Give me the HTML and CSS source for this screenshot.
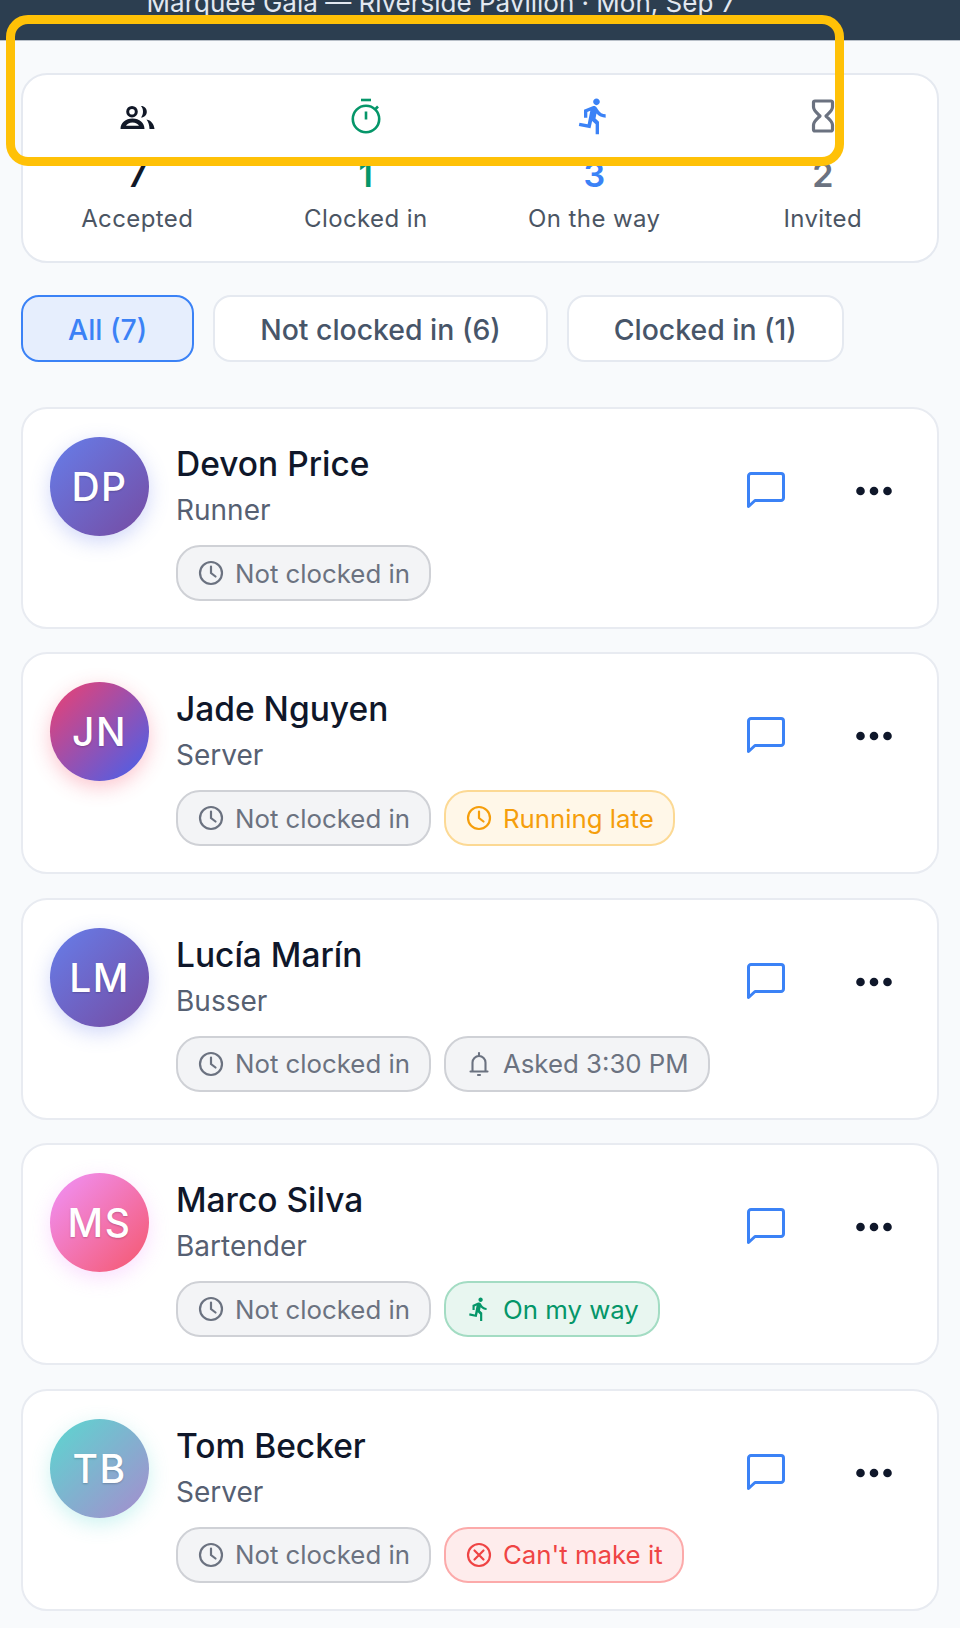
FILE: index.html
```html
<!DOCTYPE html>
<html>
<head>
<meta charset="UTF-8">
<meta name="viewport" content="width=device-width, initial-scale=1.0">
<title>Marquee Gala Staff</title>
<link rel="stylesheet" href="styles.css">
</head>
<body>
<svg class="defs" width="0" height="0">
    <symbol id="i-run" viewBox="0 0 24 24"><path fill="currentColor" d="M13.49 5.48c1.1 0 2-.9 2-2s-.9-2-2-2-2 .9-2 2 .9 2 2 2zm-3.6 13.9l1-4.4 2.1 2v6h2v-7.5l-2.1-2 .6-3c1.3 1.5 3.3 2.5 5.5 2.5v-2c-1.9 0-3.5-1-4.3-2.4l-1-1.6c-.4-.6-1-1-1.7-1-.3 0-.5.1-.8.1l-5.2 2.2v4.7h2v-3.4l1.8-.7-1.6 8.1-4.9-1-.4 2 7 1.4z"/></symbol>
    <symbol id="i-clock" viewBox="0 0 26 26"><g fill="none" stroke="currentColor" stroke-width="2.2" stroke-linecap="round"><circle cx="13" cy="13" r="11"/><path d="M13 6.500V13l4.500 3.500"/></g></symbol>
    <symbol id="i-bell" viewBox="0 0 26 26"><g fill="none" stroke="currentColor" stroke-width="2.1" stroke-linecap="round" stroke-linejoin="round"><path d="M6.500 20v-8.500a6.500 6.500 0 0 1 13 0V20"/><path d="M4.500 20.500h17"/><path d="M13 2v2.500"/><path d="M12 24h2"/></g></symbol>
    <symbol id="i-cross" viewBox="0 0 26 26"><g fill="none" stroke="currentColor" stroke-width="2.2" stroke-linecap="round"><circle cx="13" cy="13" r="11"/><path d="M8.500 8.500l9 9M17.500 8.500l-9 9"/></g></symbol>
    <symbol id="i-chat" viewBox="0 0 38 38"><path fill="none" stroke="currentColor" stroke-width="3" stroke-linejoin="round" d="M1.500 4a2.500 2.500 0 0 1 2.500-2.500h30a2.500 2.500 0 0 1 2.500 2.500v22a2.500 2.500 0 0 1-2.500 2.500H8l-6.500 6z"/></symbol>
    <symbol id="i-dots" viewBox="0 0 36 10"><g fill="currentColor"><circle cx="4.500" cy="5" r="4.300"/><circle cx="18" cy="5" r="4.300"/><circle cx="31.500" cy="5" r="4.300"/></g></symbol>
</svg>

<div class="topbar"><span class="title">Marquee Gala — Riverside Pavilion · Mon, Sep 7</span></div>
<div class="highlight"></div>

<div class="content">
    <div class="stats">
        <div class="stat">
            <svg class="stat-icon c-dark" viewBox="0 0 40 40"><g fill="currentColor"><circle cx="15" cy="15.700" r="4.300" fill="none" stroke="currentColor" stroke-width="3"/><path d="M24 10c3.500 0 5.800 2.500 5.800 5.700S27.500 21.500 24 21.500c1.300-1.600 2-3.600 2-5.800s-.7-4.100-2-5.700z"/><path fill-rule="evenodd" d="M3.500 33c0-6 5-10.500 12-10.500s12 4.500 12 10.500zM9 29.800h13c-1-2-3.500-3.300-6.500-3.300s-5.500 1.300-6.500 3.300z"/><path d="M29.500 23.500c4.500.8 7.500 4.500 8 9.500h-5c-.1-3.800-1.100-6.800-3-9.500z"/></g></svg>
            <div class="num c-dark">7</div>
            <div class="stat-label">Accepted</div>
        </div>
        <div class="stat">
            <svg class="stat-icon c-green" viewBox="0 0 40 40"><g fill="none" stroke="currentColor" stroke-width="2.600"><circle cx="20" cy="23" r="13.200"/><path d="M15 4h10"/><path d="M29.500 13l2.500-2.500"/><path d="M20 15.500v8"/></g></svg>
            <div class="num c-green">1</div>
            <div class="stat-label">Clocked in</div>
        </div>
        <div class="stat">
            <svg class="stat-icon c-blue"><use href="#i-run"/></svg>
            <div class="num c-blue">3</div>
            <div class="stat-label">On the way</div>
        </div>
        <div class="stat">
            <svg class="stat-icon c-grey" viewBox="0 0 40 40"><path fill="none" stroke="currentColor" stroke-width="3.200" stroke-linejoin="round" d="M12 5h16a1.500 1.500 0 0 1 1.500 1.500v4.500c0 3.500-3.500 6-6.500 9 3 3 6.500 5.500 6.500 9v4.500A1.500 1.500 0 0 1 28 35H12a1.500 1.500 0 0 1-1.500-1.500V29c0-3.500 3.500-6 6.500-9-3-3-6.500-5.500-6.500-9V6.500A1.500 1.500 0 0 1 12 5z"/></svg>
            <div class="num c-grey">2</div>
            <div class="stat-label">Invited</div>
        </div>
    </div>

    <div class="filters">
        <div class="chip active">All (7)</div>
        <div class="chip">Not clocked in (6)</div>
        <div class="chip">Clocked in (1)</div>
    </div>

    <div class="list">
        <div class="card">
            <div class="avatar av-dp">DP</div>
            <div class="info">
                <div class="name">Devon Price</div>
                <div class="role">Runner</div>
                <div class="pills">
                    <span class="pill"><svg class="pill-icon"><use href="#i-clock"/></svg>Not clocked in</span>
                </div>
            </div>
            <div class="actions">
                <svg class="chat"><use href="#i-chat"/></svg>
                <svg class="dots"><use href="#i-dots"/></svg>
            </div>
        </div>

        <div class="card">
            <div class="avatar av-jn">JN</div>
            <div class="info">
                <div class="name">Jade Nguyen</div>
                <div class="role">Server</div>
                <div class="pills">
                    <span class="pill"><svg class="pill-icon"><use href="#i-clock"/></svg>Not clocked in</span>
                    <span class="pill late"><svg class="pill-icon"><use href="#i-clock"/></svg>Running late</span>
                </div>
            </div>
            <div class="actions">
                <svg class="chat"><use href="#i-chat"/></svg>
                <svg class="dots"><use href="#i-dots"/></svg>
            </div>
        </div>

        <div class="card">
            <div class="avatar av-dp">LM</div>
            <div class="info">
                <div class="name">Lucía Marín</div>
                <div class="role">Busser</div>
                <div class="pills">
                    <span class="pill"><svg class="pill-icon"><use href="#i-clock"/></svg>Not clocked in</span>
                    <span class="pill"><svg class="pill-icon"><use href="#i-bell"/></svg>Asked 3:30 PM</span>
                </div>
            </div>
            <div class="actions">
                <svg class="chat"><use href="#i-chat"/></svg>
                <svg class="dots"><use href="#i-dots"/></svg>
            </div>
        </div>

        <div class="card">
            <div class="avatar av-ms">MS</div>
            <div class="info">
                <div class="name">Marco Silva</div>
                <div class="role">Bartender</div>
                <div class="pills">
                    <span class="pill"><svg class="pill-icon"><use href="#i-clock"/></svg>Not clocked in</span>
                    <span class="pill way"><svg class="pill-icon"><use href="#i-run"/></svg>On my way</span>
                </div>
            </div>
            <div class="actions">
                <svg class="chat"><use href="#i-chat"/></svg>
                <svg class="dots"><use href="#i-dots"/></svg>
            </div>
        </div>

        <div class="card">
            <div class="avatar av-tb">TB</div>
            <div class="info">
                <div class="name">Tom Becker</div>
                <div class="role">Server</div>
                <div class="pills">
                    <span class="pill"><svg class="pill-icon"><use href="#i-clock"/></svg>Not clocked in</span>
                    <span class="pill cant"><svg class="pill-icon"><use href="#i-cross"/></svg>Can't make it</span>
                </div>
            </div>
            <div class="actions">
                <svg class="chat"><use href="#i-chat"/></svg>
                <svg class="dots"><use href="#i-dots"/></svg>
            </div>
        </div>
    </div>
</div>
</body>
</html>
```
FILE: styles.css
```css
body {
    font-family: Inter, "Noto Sans", sans-serif;
    margin: 0;
    padding: 0;
    background-color: #f8fafc;
    color: #0f172a;
    overflow: hidden;
}
.defs {
    display: block;
    height: 0;
}
.topbar {
    height: 41px;
    overflow: hidden;
    padding-right: 78px;
    background-color: #2c3e50;
    border-bottom: 1px solid #b9c0c9;
    box-sizing: border-box;
    text-align: center;
}
.title {
    display: block;
    margin-top: -15px;
    font-size: 26px;
    line-height: 36px;
    color: #e2e8f0;
}
.highlight {
    position: absolute;
    left: 6px;
    top: 15px;
    width: 838px;
    height: 151px;
    box-sizing: border-box;
    border: 9px solid #ffc107;
    border-radius: 22px;
}
.content {
    padding: 32px 21px 0;
}
.stats {
    display: grid;
    grid-template-columns: repeat(4, 1fr);
    height: 190px;
    box-sizing: border-box;
    padding-top: 21px;
    background-color: #fff;
    border: 2px solid #e5e9f0;
    border-radius: 26px;
}
.stat {
    display: flex;
    flex-direction: column;
    align-items: center;
}
.stat-icon {
    width: 40px;
    height: 40px;
}
.num {
    margin-top: 19px;
    font-size: 34px;
    line-height: 40px;
    font-weight: 600;
}
.stat-label {
    margin-top: 9px;
    font-size: 24px;
    line-height: 30px;
    color: #4b5563;
    letter-spacing: 0.4px;
}
.c-dark { color: #111827; }
.c-green { color: #059669; }
.c-blue { color: #3b82f6; }
.c-grey { color: #6b7280; }
.filters {
    display: flex;
    gap: 19px;
    margin-top: 32px;
}
.chip {
    height: 67px;
    box-sizing: border-box;
    padding: 1px 45px 0;
    display: flex;
    align-items: center;
    background-color: #fff;
    border: 2px solid #e5e9f0;
    border-radius: 18px;
    font-size: 28.400px;
    font-weight: 500;
    color: #475569;
}
.chip.active {
    background-color: #e6eefd;
    border-color: #3b82f6;
    color: #3b82f6;
}
.list {
    display: flex;
    flex-direction: column;
    gap: 23.400px;
    margin-top: 45px;
}
.card {
    display: flex;
    height: 222px;
    box-sizing: border-box;
    padding: 28px 45px 0 27px;
    background-color: #fff;
    border: 2px solid #e8ebf1;
    border-radius: 26px;
}
.avatar {
    width: 99px;
    height: 99px;
    flex-shrink: 0;
    display: flex;
    align-items: center;
    justify-content: center;
    border-radius: 50%;
    color: #fff;
    font-size: 39px;
    font-weight: 500;
    letter-spacing: 1.500px;
    text-shadow: 0 1px 2px rgba(0,0,0,0.2);
}
.av-dp {
    background: linear-gradient(135deg, #667eea, #764ba2);
    box-shadow: 0 6px 20px rgba(102,126,234,0.3);
}
.av-jn {
    background: linear-gradient(135deg, #ef4070, #4361ee);
    box-shadow: 0 6px 20px rgba(244,63,94,0.3);
}
.av-ms {
    background: linear-gradient(135deg, #f093fb, #f5576c);
    box-shadow: 0 6px 20px rgba(240,147,251,0.3);
}
.av-tb {
    background: linear-gradient(135deg, #5ad8d0, #a78bce);
    box-shadow: 0 6px 20px rgba(90,216,208,0.3);
}
.info {
    flex: 1;
    margin-left: 27px;
}
.name {
    margin-top: 5px;
    font-size: 33.500px;
    line-height: 44px;
    font-weight: 500;
}
.role {
    margin-top: 2px;
    font-size: 28px;
    line-height: 44px;
    color: #566072;
}
.pills {
    display: flex;
    gap: 13px;
    margin-top: 13px;
}
.pill {
    height: 56px;
    box-sizing: border-box;
    padding: 0 19px 0 20px;
    display: flex;
    align-items: center;
    gap: 11px;
    background-color: #f3f4f6;
    border: 2px solid #cfd1d6;
    border-radius: 24px;
    font-size: 25.800px;
    color: #6b7280;
}
.pill-icon {
    width: 26px;
    height: 26px;
    flex-shrink: 0;
}
.late {
    background-color: #fff7e8;
    border-color: #fcd994;
    color: #f59e0b;
}
.way {
    background-color: #e8f6f0;
    border-color: #a3dcc3;
    color: #059669;
}
.cant {
    background-color: #feecec;
    border-color: #fcaaaa;
    color: #ef4444;
}
.actions {
    display: flex;
    gap: 71px;
    margin-top: 35px;
    align-items: flex-start;
    color: #0f172a;
}
.chat {
    width: 38px;
    height: 38px;
    color: #3b82f6;
}
.dots {
    width: 36px;
    height: 10px;
    margin-top: 14px;
}
```
